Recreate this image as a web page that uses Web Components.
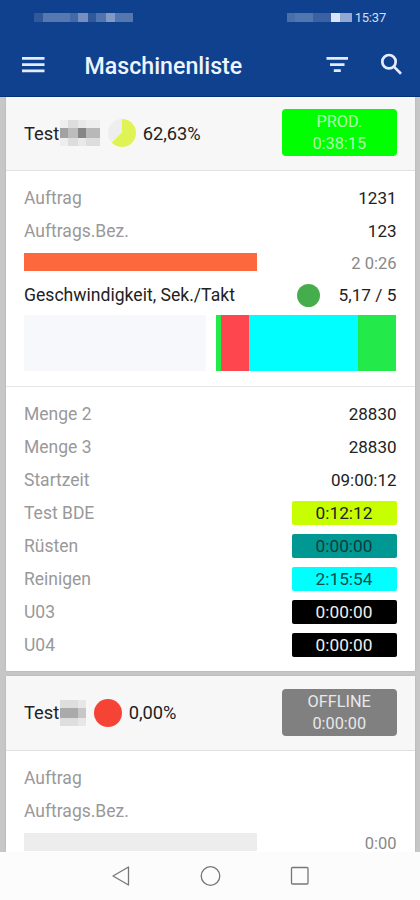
<!DOCTYPE html>
<html lang="de">
<head>
<meta charset="utf-8">
<title>Maschinenliste</title>
<style>
html,body{margin:0;height:100%;background:#fcfcfc}
body{font-family:Roboto,"Liberation Sans",sans-serif;font-size:17px;color:#222;overflow:hidden}
</style>
</head>
<body>
<machine-app></machine-app>
<script>
const define = (name, render) => customElements.define(name, class extends HTMLElement {
  connectedCallback() {
    if (this.shadowRoot) return;
    this.attachShadow({mode: 'open'}).innerHTML = render(this);
  }
});

// Grid of flat colour cells, sized by the widths and heights lists.
define('mosaic-patch', el => {
  const widths = el.getAttribute('widths').split(' ');
  const heights = el.getAttribute('heights').split(' ');
  const cells = el.getAttribute('colors').split(' ').map(c => `<i style="background:${c}"></i>`).join('');
  return `<style>:host{display:grid;flex:none;grid-template-columns:${widths.map(w => w + 'px').join(' ')};grid-template-rows:${heights.map(h => h + 'px').join(' ')}}i{display:block}</style>${cells}`;
});

define('status-strip', () => `<style>
:host{display:flex;height:34px;align-items:center;padding:0 34px 0 34px;box-sizing:border-box;color:#d3def2;font-size:13px;letter-spacing:-.2px}
span{flex:1}time{margin-left:3px}</style>
<mosaic-patch widths="9 27 8 10 8 10 9 18" heights="9" colors="#315999 #5678b0 #436aa7 #7590c0 #315999 #5075ae #8299c6 #5477b0"></mosaic-patch>
<span></span>
<mosaic-patch widths="8 18 18 9 12" heights="9" colors="#486eab #5276af #3b61a3 #dbe5f8 #90a8d2"></mosaic-patch>
<time>15:37</time>`);

define('app-bar', () => `<style>
:host{display:block;height:97px;background:#10418f;box-sizing:border-box;border-bottom:1px solid #06327c}
div{display:flex;align-items:center;height:62px;padding:0 17px 0 21px}
h1{margin:0 0 0 39.500px;flex:1;font-size:23.200px;font-weight:500;color:#edf4ff;line-height:30px;padding-top:2px}
svg{display:block;fill:#e3ecfd}
.f{margin-right:1px}
.s{margin-left:30px}</style>
<status-strip></status-strip>
<div>
<svg width="24" height="20" viewBox="0 0 24 20"><path d="M1 2h22.500v2.700h-22.500zM1 8.300h22.500v2.700h-22.500zM1 14.600h22.500v2.700h-22.500z"/></svg>
<h1><slot></slot></h1>
<svg class="f" width="22" height="20" viewBox="0 0 22 20"><path d="M.5 2h21.500v2.700h-21.500zM4 8.200h14.500v2.700h-14.500zM7.800 14.200h7v2.700h-7z"/></svg>
<svg class="s" width="24" height="24" viewBox="0 0 24 24"><g fill="none" stroke="#e3ecfd" stroke-width="2.700"><circle cx="10" cy="8.700" r="6.700"/><path d="M14.600 13.400L22 20.800"/></g></svg>
</div>`);

define('state-button', el => `<style>
:host{display:flex;flex-direction:column;align-items:center;width:114.500px;height:47px;border-radius:4px;background:${el.getAttribute('color')};color:${el.getAttribute('ink')};font-size:16.300px;line-height:22px;padding-top:1.500px;box-sizing:border-box}</style>
<slot></slot>`);

define('machine-card', () => `<style>
:host{display:block;background:#fff;border-radius:1px;box-shadow:0 0 2px #aaa}
header{display:flex;align-items:center;height:75px;box-sizing:border-box;padding:0 18.500px;background:#f7f7f7;border-bottom:1px solid #e0e0e0;font-size:18.300px}
.name{display:flex;align-items:center;flex:1}
.body{padding:var(--body-top,10.500px) 18.500px 0}</style>
<header><div class="name"><slot name="title"></slot></div><slot name="state"></slot></header>
<div class="body"><slot></slot></div>`);

define('data-row', el => `<style>
:host{display:flex;height:33px;align-items:center;justify-content:space-between;line-height:33px}
.l{color:#999;font-size:17.500px}</style>
<span class="l">${el.getAttribute('label')}</span><slot></slot>`);

define('time-chip', el => `<style>
:host{display:block;width:105px;height:24px;margin-top:-1px;border-radius:2px;text-align:center;line-height:25px;font-size:17.300px;background:${el.getAttribute('color')};color:${el.getAttribute('ink') || '#222'}}</style><slot></slot>`);

define('progress-row', el => `<style>
:host{display:flex;height:33px;align-items:flex-start;justify-content:space-between;color:#888;font-size:16.500px}
i{display:block;width:233px;height:18px;margin-top:5.500px;background:${el.getAttribute('color')}}
span{line-height:32px}</style><i></i><span><slot></slot></span>`);

define('speed-row', () => `<style>
:host{display:flex;height:33px;align-items:center;line-height:33px;margin-top:-1.500px}
.l{flex:1;font-size:17.600px}i{width:23px;height:23px;border-radius:50%;background:#46ad4c;margin-right:18.500px;margin-top:-1px}.v{font-size:17.300px}</style>
<span class="l">Geschwindigkeit, Sek./Takt</span><i></i><span class="v"><slot></slot></span>`);

define('history-chart', () => `<style>
:host{display:flex;height:56px;margin:3px .5px 0 0}i{display:block}</style>
<i style="width:182px;background:#f6f8fc;margin-right:9.500px"></i>
<i style="width:5.500px;background:#24e94a"></i><i style="width:27.500px;background:#fe464e"></i><i style="width:109.500px;background:#0ff"></i><i style="flex:1;background:#24e94a"></i>`);

define('nav-bar', () => `<style>
:host{display:grid;grid-template-columns:repeat(3,89.500px);justify-content:center;align-items:center;justify-items:center;height:48px;background:#fcfcfc}
svg{display:block;fill:none;stroke:#777;stroke-width:1.300;stroke-linejoin:round}</style>
<svg width="22" height="22" viewBox="0 0 22 22"><path d="M18.500 2v18L3 11z"/></svg>
<svg width="22" height="22" viewBox="0 0 22 22"><circle cx="11.500" cy="11" r="9.300"/></svg>
<svg width="22" height="22" viewBox="0 0 22 22"><rect x="2.500" y="2.500" width="16.500" height="16.500" rx="1"/></svg>`);

define('machine-app', () => `<style>
:host{display:flex;flex-direction:column;height:900px;width:420px;overflow:hidden}
main{flex:1;min-height:0;overflow:hidden;background:#c7c7c7;padding:0 5px 0 5.500px}
machine-card{height:575px}
machine-card+machine-card{margin-top:4.500px;--body-top:11px}
hr{border:0;border-top:1.500px solid #e6e6e6;height:0;margin:14.500px -18.500px 11px}
.pie,.dot{flex:none;width:28px;height:28px;border-radius:50%;margin-right:7px}
.pie{background:conic-gradient(#e0f354 62.630%,#eee 0);margin-left:8px}
.dot{background:#f54335;margin-left:8px}
.first{margin-top:-1px}
mosaic-patch{margin-left:.5px}
.first state-button,.first>state-button{margin-top:-1px}</style>
<app-bar>Maschinenliste</app-bar>
<main>
<machine-card class="first">
<span slot="title">Test</span><mosaic-patch slot="title" widths="8 10 8 14" heights="8 10 8" colors="#eee #ddd #e8e8e8 #eee #a2a2a2 #bcbcbc #858585 #b8b8b8 #eee #ddd #e9e9e9 #ddd"></mosaic-patch><i slot="title" class="pie"></i><span slot="title">62,63%</span>
<state-button slot="state" color="#00ff00" ink="#b5ffae"><span>PROD.</span><span>0:38:15</span></state-button>
<data-row label="Auftrag"><span>1231</span></data-row>
<data-row label="Auftrags.Bez."><span>123</span></data-row>
<progress-row color="#fd693d">2 0:26</progress-row>
<speed-row>5,17 / 5</speed-row>
<history-chart></history-chart>
<hr>
<data-row label="Menge 2"><span>28830</span></data-row>
<data-row label="Menge 3"><span>28830</span></data-row>
<data-row label="Startzeit"><span>09:00:12</span></data-row>
<data-row label="Test BDE"><time-chip color="#c8ff00">0:12:12</time-chip></data-row>
<data-row label="Rüsten"><time-chip color="#009893" ink="#123b3a">0:00:00</time-chip></data-row>
<data-row label="Reinigen"><time-chip color="#00ffff" ink="#104a4a">2:15:54</time-chip></data-row>
<data-row label="U03"><time-chip color="#000" ink="#eee">0:00:00</time-chip></data-row>
<data-row label="U04"><time-chip color="#000" ink="#eee">0:00:00</time-chip></data-row>
</machine-card>
<machine-card>
<span slot="title">Test</span><mosaic-patch slot="title" widths="18 8" heights="8 10 8" colors="#dedede #e7e7e7 #aaa #c7c7c7 #dedede #e7e7e7"></mosaic-patch><i slot="title" class="dot"></i><span slot="title">0,00%</span>
<state-button slot="state" color="#808080" ink="#e8e8e8"><span>OFFLINE</span><span>0:00:00</span></state-button>
<data-row label="Auftrag"></data-row>
<data-row label="Auftrags.Bez."></data-row>
<progress-row color="#ededed">0:00</progress-row>
</machine-card>
</main>
<nav-bar></nav-bar>`);
</script>
</body>
</html>
